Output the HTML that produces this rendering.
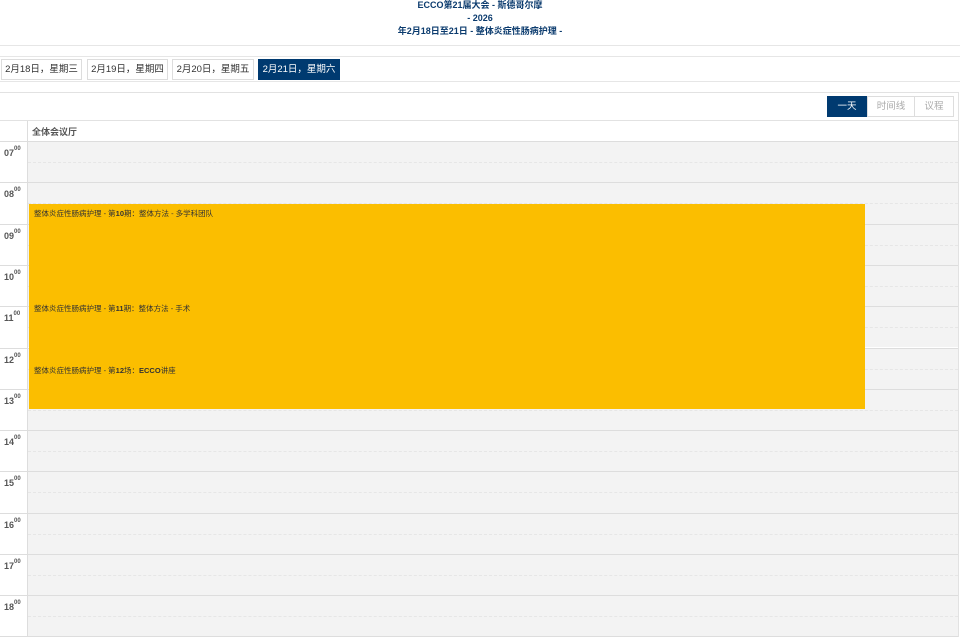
<!DOCTYPE html>
<html><head><meta charset="utf-8"><style>
*{box-sizing:border-box;margin:0;padding:0}
body{width:960px;height:640px;overflow:hidden;background:#fff;font-family:"Liberation Sans","Noto Sans CJK SC",sans-serif;position:relative}
.hd{position:absolute;left:0;width:960px;text-align:center;color:#0b3b6e;font-weight:bold;font-size:9px;line-height:11px}
.abs{position:absolute}
.db{position:absolute;top:59px;height:21px;border:1px solid #ddd;font-size:9.5px;color:#333;line-height:19px;text-align:center;background:#fff}
.tb{position:absolute;top:96px;height:21px;border:1px solid #ddd;font-size:9.5px;color:#aaa;line-height:19px;text-align:center;background:#fff}
.hr{position:absolute;left:0;width:958px;height:41.3px;border-top:1px solid #ddd}
.hr .t{position:absolute;left:4px;top:6px;font-size:9px;color:#555;font-weight:bold}
.hr .t sup{font-size:6px;vertical-align:top;position:relative;top:-2px}
.hr .s{position:absolute;left:28px;right:0;top:0;height:100%;background:#f3f3f3}
.hr .h{position:absolute;left:28px;right:0;top:20px;border-top:1px dashed #e6e6e6}
.ev{position:absolute;font-size:7.5px;color:#333;left:34px}
</style></head><body>
<div class="hd" style="top:0">ECCO第21届大会 - 斯德哥尔摩</div>
<div class="hd" style="top:13px">- 2026</div>
<div class="hd" style="top:26px">年2月18日至21日 - 整体炎症性肠病护理 -</div>
<div class="abs" style="top:45px;left:0;width:960px;border-top:1px solid #e6e6e6"></div>
<div class="abs" style="top:56px;left:0;width:960px;height:26px;border-top:1px solid #e6e6e6;border-bottom:1px solid #e6e6e6"></div>
<div class="db" style="left:1px;width:81px">2月18日，星期三</div>
<div class="db" style="left:87px;width:81px">2月19日，星期四</div>
<div class="db" style="left:172px;width:82px">2月20日，星期五</div>
<div class="db" style="left:258px;width:82px;background:#003a70;color:#fff;border-color:#003a70">2月21日，星期六</div>
<div class="abs" style="top:92px;left:0;width:959px;height:545px;border:1px solid #e2e2e2;border-left:none"></div>
<div class="tb" style="left:827px;width:40px;background:#003a70;color:#fff;border-color:#003a70">一天</div>
<div class="tb" style="left:867px;width:48px">时间线</div>
<div class="tb" style="left:914px;width:40px">议程</div>
<div class="abs" style="top:120px;left:0;width:958px;border-top:1px solid #e2e2e2"></div>
<div class="abs" style="top:121px;left:27px;height:516px;border-left:1px solid #ddd;z-index:3"></div>
<div class="abs" style="top:125px;left:32px;font-size:9px;color:#555;font-weight:bold">全体会议厅</div>
<div class="hr" style="top:141px"><span class="s"></span><span class="h"></span><span class="t">07<sup>00</sup></span></div>
<div class="hr" style="top:182.3px"><span class="s"></span><span class="h"></span><span class="t">08<sup>00</sup></span></div>
<div class="hr" style="top:223.6px"><span class="s"></span><span class="h"></span><span class="t">09<sup>00</sup></span></div>
<div class="hr" style="top:264.9px"><span class="s"></span><span class="h"></span><span class="t">10<sup>00</sup></span></div>
<div class="hr" style="top:306.2px"><span class="s"></span><span class="h"></span><span class="t">11<sup>00</sup></span></div>
<div class="hr" style="top:347.5px"><span class="s"></span><span class="h"></span><span class="t">12<sup>00</sup></span></div>
<div class="hr" style="top:388.8px"><span class="s"></span><span class="h"></span><span class="t">13<sup>00</sup></span></div>
<div class="hr" style="top:430.1px"><span class="s"></span><span class="h"></span><span class="t">14<sup>00</sup></span></div>
<div class="hr" style="top:471.4px"><span class="s"></span><span class="h"></span><span class="t">15<sup>00</sup></span></div>
<div class="hr" style="top:512.7px"><span class="s"></span><span class="h"></span><span class="t">16<sup>00</sup></span></div>
<div class="hr" style="top:554px"><span class="s"></span><span class="h"></span><span class="t">17<sup>00</sup></span></div>
<div class="hr" style="top:595.3px"><span class="s"></span><span class="h"></span><span class="t">18<sup>00</sup></span></div>
<div class="abs" style="top:636px;left:0;width:958px;border-top:1px solid #ddd"></div>
<div class="abs" style="top:204px;left:29px;width:836px;height:205px;background:#fbbe00"></div>
<div class="ev" style="top:208px">整体炎症性肠病护理 - 第<b>10</b>期：整体方法 - 多学科团队</div>
<div class="ev" style="top:303px">整体炎症性肠病护理 - 第<b>11</b>期：整体方法 - 手术</div>
<div class="ev" style="top:365px">整体炎症性肠病护理 - 第<b>12</b>场：<b>ECCO</b>讲座</div>
</body></html>
